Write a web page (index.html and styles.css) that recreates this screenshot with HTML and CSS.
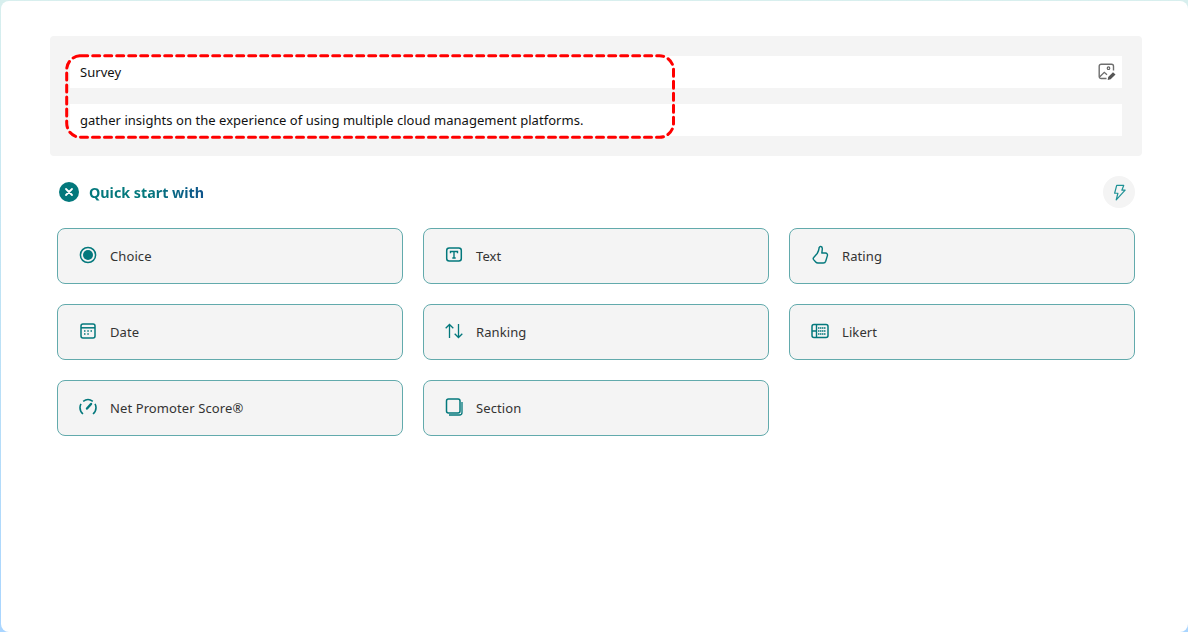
FILE: index.html
```html
<!DOCTYPE html>
<html lang="en">
<head>
<meta charset="utf-8">
<title>Survey</title>
<link rel="stylesheet" href="styles.css">
</head>
<body>
<main class="sheet">
  <section class="panel">
    <div class="field field-title">
      <span>Survey</span>
      <svg class="image-icon" viewBox="0 0 18 18" width="18" height="18" fill="none">
        <path d="M8.500 15.500H3.200A2 2 0 0 1 1.200 13.500V3.200A2 2 0 0 1 3.200 1.200H13.500A2 2 0 0 1 15.500 3.200V7.500" stroke="#6e6e6e" stroke-width="1.400"/>
        <path d="M1.800 13.800 6.300 9.300 9 11.700" stroke="#6e6e6e" stroke-width="1.300"/>
        <circle cx="10.500" cy="5.200" r="1.300" stroke="#5f5f5f" stroke-width="1.100"/>
        <path d="M9.700 17 10.200 14 15 9.300 17.500 11.500 12.700 16.300Z" fill="#555"/>
      </svg>
    </div>
    <div class="field">gather insights on the experience of using multiple cloud management platforms.</div>
    <svg class="highlight" width="612" height="88" viewBox="0 0 612 88" fill="none">
      <rect x="1.700" y="1.800" width="606.800" height="81.500" rx="14" stroke="#ff0000" stroke-width="3" stroke-dasharray="7 5" stroke-linecap="round"/>
    </svg>
  </section>

  <section class="quick">
    <header class="quick-head">
      <div class="quick-title">
        <svg viewBox="0 0 20 20" width="20" height="20">
          <circle cx="10" cy="10" r="10" fill="#03787c"/>
          <path d="M7 7l6 6M13 7l-6 6" stroke="#fff" stroke-width="1.800" stroke-linecap="round"/>
        </svg>
        <span class="quick-label">Quick start with</span>
      </div>
      <button class="bolt" type="button" aria-label="Generate">
        <svg viewBox="0 0 16 18" width="15" height="17" fill="none">
          <path d="M5 1.500H12.500L10.500 6.500H14L4.500 16.800L6.300 9.800H2.800Z" stroke="#1f9296" stroke-width="1.300" stroke-linejoin="round"/>
        </svg>
      </button>
    </header>

    <div class="grid">
      <button class="tile" type="button">
        <svg class="tile-icon" viewBox="0 0 20 20" fill="none"><circle cx="10" cy="10" r="7.600" stroke="#03787c" stroke-width="1.500"/><circle cx="10" cy="10" r="5" fill="#03787c"/></svg>
        <span>Choice</span>
      </button>
      <button class="tile" type="button">
        <svg class="tile-icon" viewBox="0 0 20 20" fill="none"><rect x="2.700" y="3" width="14.600" height="13" rx="2.500" stroke="#03787c" stroke-width="1.500"/><path d="M6.500 8.200V6.500H13.500V8.200M10 6.500V13M8.300 13H11.700" stroke="#03787c" stroke-width="1.400"/></svg>
        <span>Text</span>
      </button>
      <button class="tile" type="button">
        <svg class="tile-icon" viewBox="0 0 20 20" fill="none"><path d="M11.800 8H15.500A2 2 0 0 1 17.400 10.600L15.700 16.300A2.500 2.500 0 0 1 13.300 18H8A3 3 0 0 1 5.700 17L3.600 14.600A1.600 1.600 0 0 1 3.700 12.500L7.200 8.500C8.500 6.500 9 4.500 9.200 2.700C9.300 1 12.300 1 12.300 3.500C12.300 5.200 12 6.500 11.800 8Z" stroke="#03787c" stroke-width="1.400" stroke-linejoin="round"/></svg>
        <span>Rating</span>
      </button>
      <button class="tile" type="button">
        <svg class="tile-icon" viewBox="0 0 20 20" fill="none"><rect x="3" y="3" width="14" height="14" rx="2" stroke="#03787c" stroke-width="1.500"/><path d="M3 6.800H17" stroke="#03787c" stroke-width="1.500"/><path d="M6 10h1.500M9.300 10h1.500M12.500 10H14M6 13h1.500M9.300 13h1.500" stroke="#03787c" stroke-width="1.500"/></svg>
        <span>Date</span>
      </button>
      <button class="tile" type="button">
        <svg class="tile-icon" viewBox="0 0 20 20" fill="none"><path d="M5.500 17V3.500M1.700 7.300 5.500 3.500 9.300 7.300" stroke="#03787c" stroke-width="1.300"/><path d="M14.500 3V16.500M10.700 12.700 14.500 16.500 18.300 12.700" stroke="#03787c" stroke-width="1.300"/></svg>
        <span>Ranking</span>
      </button>
      <button class="tile" type="button">
        <svg class="tile-icon" viewBox="0 0 20 20" fill="none"><rect x="2" y="3.500" width="16" height="13" rx="2" stroke="#03787c" stroke-width="1.500"/><path d="M6.500 3.500V16.500M2 10H6.500" stroke="#03787c" stroke-width="1.400"/><path d="M8 7H16M8 10H16M8 13H16" stroke="#03787c" stroke-width="1.300" stroke-dasharray="1.500 .5"/></svg>
        <span>Likert</span>
      </button>
      <button class="tile" type="button">
        <svg class="tile-icon" viewBox="0 0 20 20" fill="none"><path d="M5 17A8 8 0 0 1 2 10.500C2 9 2.400 7.800 3 6.800M5.200 4.300A8 8 0 0 1 14.800 4.300M17 6.800C17.600 7.800 18 9 18 10.500A8 8 0 0 1 15 17" stroke="#03787c" stroke-width="1.600"/><path d="M9 11.500 13 7" stroke="#03787c" stroke-width="2.400" stroke-linecap="round"/></svg>
        <span>Net Promoter Score®</span>
      </button>
      <button class="tile" type="button">
        <svg class="tile-icon" viewBox="0 0 20 20" fill="none"><rect x="2.500" y="2" width="13.500" height="14" rx="2" stroke="#03787c" stroke-width="1.500"/><path d="M18 5V15.500A2.500 2.500 0 0 1 15.500 18H5" stroke="#03787c" stroke-width="1.300"/></svg>
        <span>Section</span>
      </button>
    </div>
  </section>
</main>
</body>
</html>
```
FILE: styles.css
```css
* { box-sizing: border-box; }
html, body { height: 100%; }
body {
  margin: 0;
  overflow: hidden;
  padding: 1px 0 0 1px;
  background: linear-gradient(180deg, #d8efee 0%, #bfe3f4 45%, #a9d5ff 100%);
  font-family: "Noto Sans", "Open Sans", sans-serif;
  font-size: 13px;
  letter-spacing: 0.04px;
  color: #242424;
}
.sheet {
  height: 100%;
  padding: 35px 46px 0 49px;
  background: #fff;
  border-radius: 8px;
}
.panel {
  position: relative;
  padding: 20px;
  background: #f4f4f4;
  border-radius: 4px;
  display: flex;
  flex-direction: column;
  gap: 16px;
}
.field {
  height: 32px;
  padding: 0 6px 0 10px;
  display: flex;
  align-items: center;
  justify-content: space-between;
  background: #fff;
  color: #111;
}
.image-icon { flex: none; }
.highlight {
  position: absolute;
  left: 15px;
  top: 18px;
}
.quick { padding: 20px 7px 0; }
.quick-head {
  height: 32px;
  display: flex;
  align-items: center;
  justify-content: space-between;
}
.quick-title {
  padding-left: 2px;
  display: flex;
  align-items: center;
  gap: 10px;
}
.quick-title svg { display: block; }
.quick-label {
  font-size: 14.300px;
  font-weight: 700;
  letter-spacing: 0;
  background: linear-gradient(90deg, #03787c 0%, #03787c 50%, #0f548c 100%);
  -webkit-background-clip: text;
  background-clip: text;
  color: transparent;
}
.bolt {
  width: 32px;
  height: 32px;
  padding: 0;
  border: 0;
  border-radius: 50%;
  background: #f4f4f4;
  display: flex;
  align-items: center;
  justify-content: center;
}
.grid {
  margin-top: 20px;
  display: grid;
  grid-template-columns: repeat(3, 346px);
  grid-auto-rows: 56px;
  gap: 20px;
}
.tile {
  padding: 0 0 0 20px;
  display: flex;
  align-items: center;
  gap: 12px;
  border: 1px solid #62aaac;
  border-radius: 8px;
  background: #f4f4f4;
  font: inherit;
  letter-spacing: 0.1px;
  color: #333;
  text-align: left;
}
.tile-icon {
  flex: none;
  width: 20px;
  height: 20px;
  margin-top: -2px;
}
```
